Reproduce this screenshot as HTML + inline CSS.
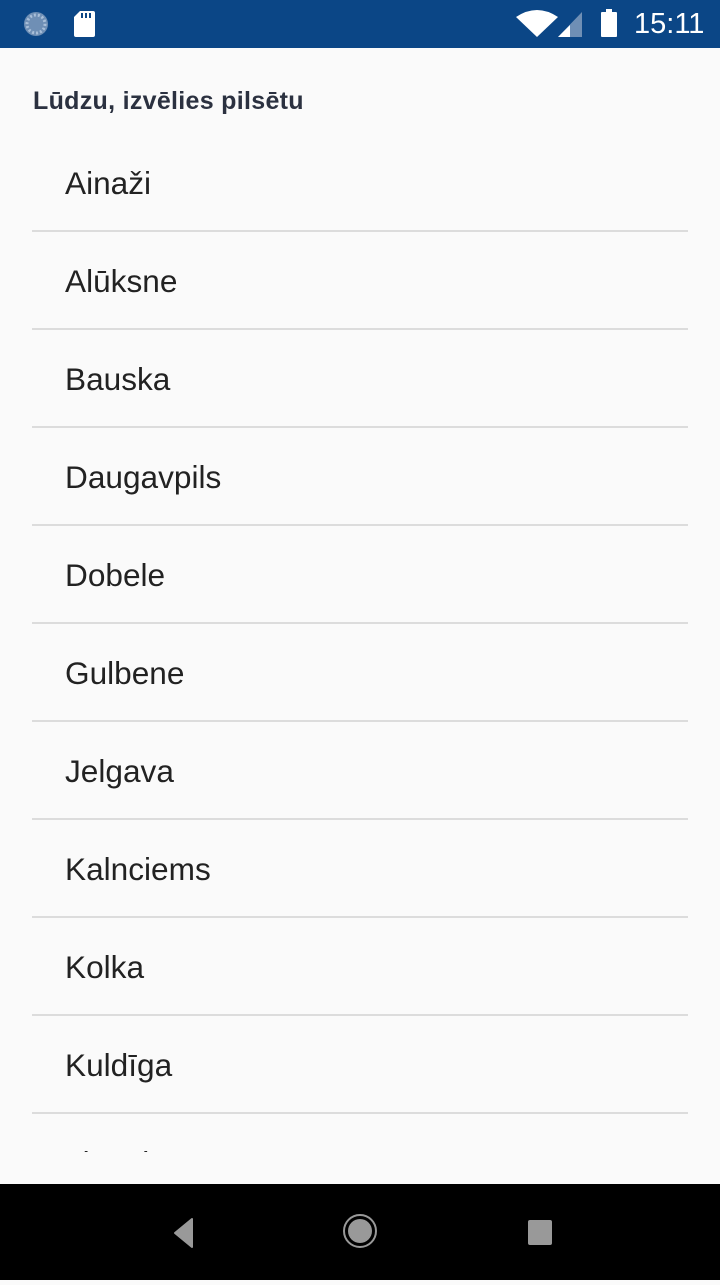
<!DOCTYPE html>
<html><head><meta charset="utf-8"><style>
*{margin:0;padding:0;box-sizing:border-box}
body{width:720px;height:1280px;background:#fafafa;font-family:"Liberation Sans",sans-serif;position:relative;overflow:hidden}
.sb{position:absolute;top:0;left:0;width:720px;height:48px;background:#0b4686}
.time{position:absolute;left:634px;top:8px;color:#fff;font-size:29px;letter-spacing:0px}
h1{position:absolute;left:33px;top:87px;font-size:25px;font-weight:bold;color:#2b3140;letter-spacing:0.3px}
.list{position:absolute;top:134px;left:0;width:720px;height:1018px;overflow:hidden}
.row{height:98px;position:relative}
.row span{position:absolute;left:65px;top:31px;font-size:31.6px;color:#222}
.row i{position:absolute;left:32px;right:32px;bottom:0;height:2px;background:#dcdcdc}
.nav{position:absolute;top:1184px;left:0;width:720px;height:96px;background:#000}
</style></head><body>
<div class="sb">
<svg width="720" height="48" style="position:absolute;left:0;top:0">
<circle cx="36" cy="24" r="12" fill="#6f8fb5"/><circle cx="36" cy="24" r="9" fill="none" stroke="#a9bfd9" stroke-width="3" stroke-dasharray="2 2"/>
<path d="M80 11h13a2 2 0 0 1 2 2v22a2 2 0 0 1-2 2H76a2 2 0 0 1-2-2V17z" fill="#fff"/>
<rect x="81" y="13" width="2" height="5" fill="#0b4686"/><rect x="85" y="13" width="2" height="5" fill="#0b4686"/><rect x="89" y="13" width="2" height="5" fill="#0b4686"/>
<path d="M516 17q21-14 42 0l-21 20z" fill="#fff"/>
<path d="M558 37l24-25v25z" fill="#6f8fb5"/><path d="M558 37l12-12v12z" fill="#fff"/>
<rect x="601" y="12" width="16" height="25" rx="1" fill="#fff"/><rect x="606" y="9" width="6" height="4" fill="#fff"/>
</svg>
<div class="time">15:11</div>
</div>
<h1>Lūdzu, izvēlies pilsētu</h1>
<div class="list">
<div class="row"><span>Ainaži</span><i></i></div>
<div class="row"><span>Alūksne</span><i></i></div>
<div class="row"><span>Bauska</span><i></i></div>
<div class="row"><span>Daugavpils</span><i></i></div>
<div class="row"><span>Dobele</span><i></i></div>
<div class="row"><span>Gulbene</span><i></i></div>
<div class="row"><span>Jelgava</span><i></i></div>
<div class="row"><span>Kalnciems</span><i></i></div>
<div class="row"><span>Kolka</span><i></i></div>
<div class="row"><span>Kuldīga</span><i></i></div>
<div class="row"><span>Liepāja</span><i></i></div>
</div>
<div class="nav">
<svg width="720" height="96">
<path d="M192 35v28l-17-14z" fill="#999" stroke="#999" stroke-width="2" stroke-linejoin="round"/>
<circle cx="360" cy="47" r="16" fill="none" stroke="#999" stroke-width="2"/>
<circle cx="360" cy="47" r="12" fill="#999"/>
<rect x="528" y="36" width="24" height="25" rx="2" fill="#999"/>
</svg>
</div>
</body></html>
